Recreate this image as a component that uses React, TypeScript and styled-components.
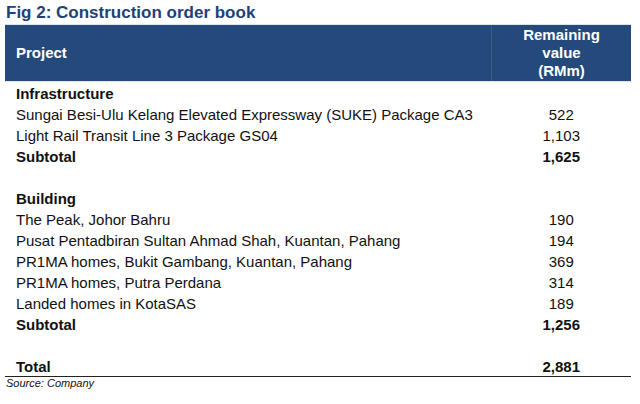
import React from 'react';
import styled, { createGlobalStyle } from 'styled-components';

const GlobalStyle = createGlobalStyle`
  body {
    margin: 0;
    background: #ffffff;
    font-family: "Liberation Sans", Arial, sans-serif;
  }
`;

const Page = styled.div`
  width: 640px;
  height: 404px;
  padding: 2px 0 0 5px;
  box-sizing: border-box;
`;

const Title = styled.h1`
  margin: 0 0 0 1px;
  font-size: 17px;
  line-height: 21px;
  font-weight: bold;
  color: #1f4274;
`;

const Table = styled.table`
  width: 626px;
  margin-top: 1px;
  border-collapse: collapse;
  font-size: 15px;
  color: #111;
`;

const HeadCell = styled.th<{ $value?: boolean }>`
  height: 56px;
  padding: 0 ${(p) => (p.$value ? '0' : '11px')};
  background: #244a7b;
  color: #fff;
  font-weight: bold;
  font-size: 15px;
  line-height: 18px;
  text-align: ${(p) => (p.$value ? 'center' : 'left')};
  width: ${(p) => (p.$value ? '139px' : 'auto')};
  border-top: 1px solid #dfe4ec;
  border-bottom: 1px solid #dfe4ec;
  border-left: ${(p) => (p.$value ? '1px solid #3a5c88' : 'none')};
  vertical-align: middle;
`;

const Row = styled.tr<{ $line?: boolean }>`
  height: 21px;
  border-bottom: ${(p) => (p.$line ? '1px solid #222' : 'none')};
`;

const Cell = styled.td<{ $bold?: boolean }>`
  padding: 2px 0 0 11px;
  line-height: 19px;
  font-weight: ${(p) => (p.$bold ? 'bold' : 'normal')};
  white-space: nowrap;
`;

const Value = styled.td<{ $bold?: boolean }>`
  padding: 2px 0 0;
  text-align: center;
  line-height: 19px;
  font-weight: ${(p) => (p.$bold ? 'bold' : 'normal')};
`;

const Source = styled.div`
  margin: 0 0 0 1px;
  font-size: 11px;
  line-height: 13px;
  font-style: italic;
  color: #111;
`;

type Line = { label: string; value?: string; bold?: boolean; line?: boolean };

const lines: Line[] = [
  { label: 'Infrastructure', bold: true },
  { label: 'Sungai Besi-Ulu Kelang Elevated Expressway (SUKE) Package CA3', value: '522' },
  { label: 'Light Rail Transit Line 3 Package GS04', value: '1,103' },
  { label: 'Subtotal', value: '1,625', bold: true },
  { label: '' },
  { label: 'Building', bold: true },
  { label: 'The Peak, Johor Bahru', value: '190' },
  { label: 'Pusat Pentadbiran Sultan Ahmad Shah, Kuantan, Pahang', value: '194' },
  { label: 'PR1MA homes, Bukit Gambang, Kuantan, Pahang', value: '369' },
  { label: 'PR1MA homes, Putra Perdana', value: '314' },
  { label: 'Landed homes in KotaSAS', value: '189' },
  { label: 'Subtotal', value: '1,256', bold: true },
  { label: '' },
  { label: 'Total', value: '2,881', bold: true, line: true },
];

function App() {
  return (
    <Page>
      <GlobalStyle />
      <Title>Fig 2: Construction order book</Title>
      <Table>
        <thead>
          <tr>
            <HeadCell>Project</HeadCell>
            <HeadCell $value>
              Remaining
              <br />
              value
              <br />
              (RMm)
            </HeadCell>
          </tr>
        </thead>
        <tbody>
          {lines.map((l, i) => (
            <Row key={i} $line={l.line}>
              <Cell $bold={l.bold}>{l.label}</Cell>
              <Value $bold={l.bold}>{l.value}</Value>
            </Row>
          ))}
        </tbody>
      </Table>
      <Source>Source: Company</Source>
    </Page>
  );
}

export default App;
